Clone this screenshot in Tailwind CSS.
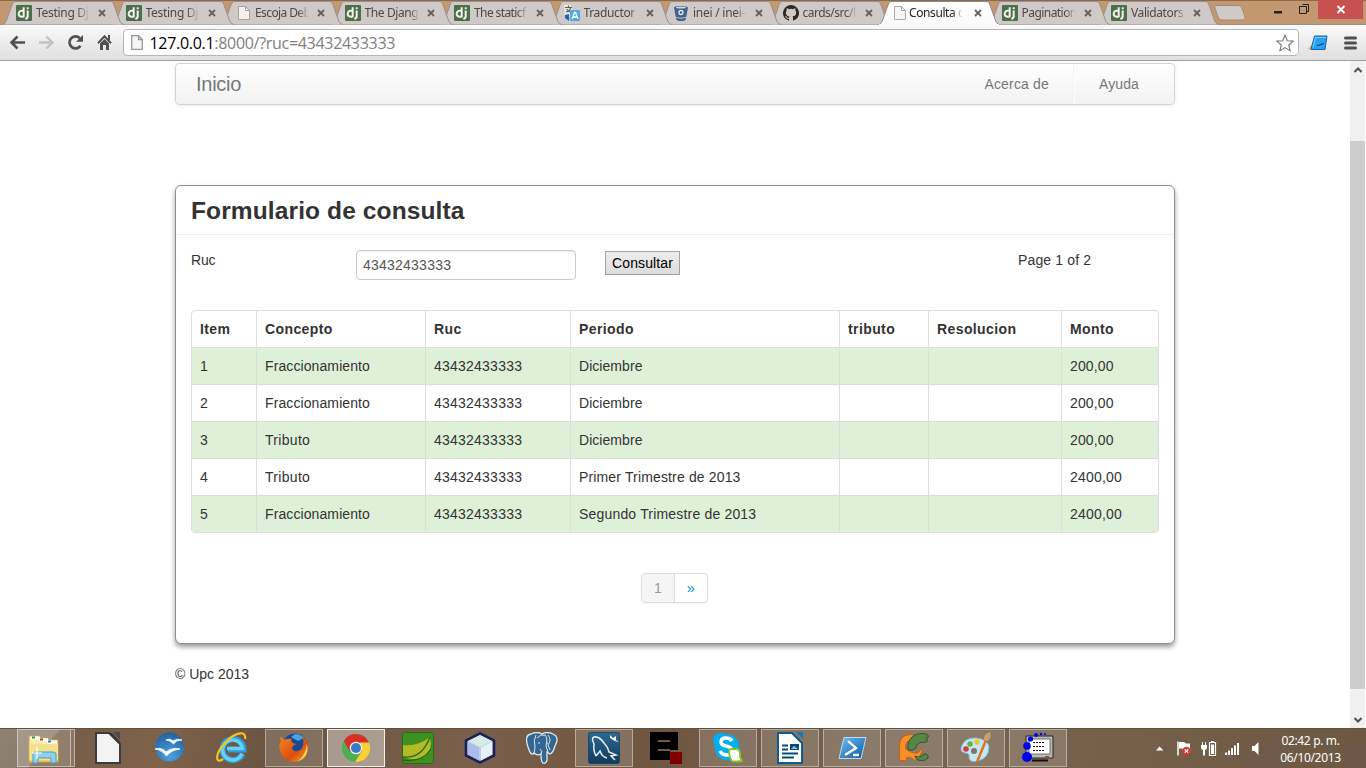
<!DOCTYPE html>
<html lang="es">
<head>
<meta charset="utf-8">
<title>Consulta de tributos</title>
<script src="https://cdn.jsdelivr.net/npm/@tailwindcss/browser@4"></script>
</head>
<body class="w-[1366px] h-[768px] overflow-hidden flex flex-col bg-white font-['Liberation_Sans',sans-serif] text-sm leading-5 text-[#333]">

<svg class="absolute size-0">
  <defs>
    <linearGradient id="gActive" x1="0" y1="0" x2="0" y2="1"><stop offset="0" stop-color="#fff"/><stop offset="1" stop-color="#fafafa"/></linearGradient>
    <linearGradient id="gBlue" x1="0" y1="0" x2="1" y2="1"><stop offset="0" stop-color="#6fc0ee"/><stop offset="1" stop-color="#0b57a4"/></linearGradient>
    <linearGradient id="gFolder" x1="0" y1="0" x2="0" y2="1"><stop offset="0" stop-color="#fdf6b8"/><stop offset="1" stop-color="#e9cf6c"/></linearGradient>
    <linearGradient id="gDark" x1="0" y1="0" x2="0" y2="1"><stop offset="0" stop-color="#2c6a94"/><stop offset="1" stop-color="#113a5c"/></linearGradient>
    <radialGradient id="gBird" cx=".5" cy=".8" r=".8"><stop offset="0" stop-color="#4aa3e0"/><stop offset="1" stop-color="#22619f"/></radialGradient>
    <linearGradient id="gFox" x1="0" y1="0" x2="1" y2="1"><stop offset="0" stop-color="#f08a1c"/><stop offset=".6" stop-color="#dd4c12"/><stop offset="1" stop-color="#f7b52a"/></linearGradient>
  </defs>
  <symbol id="tab" viewBox="0 0 122 25"><path d="M0 24.5C3 24 4 22 5 19L10 5C11 2 12 1.500 14 1.500H108C110 1.500 111 2 112 5L117 19C118 22 119 24 122 24.500" fill="#cfcac7" stroke="#96918e"/></symbol>
  <symbol id="tabActive" viewBox="0 0 122 25"><path d="M0 25C3 24 4 22 5 19L10 5C11 2 12 1.500 14 1.500H108C110 1.500 111 2 112 5L117 19C118 22 119 24 122 25" fill="url(#gActive)" stroke="#8d8986"/><path d="M1 24.500H121" stroke="#fafafa"/></symbol>
  <symbol id="dj" viewBox="0 0 16 16"><rect width="16" height="16" rx="1" fill="#4c6f4b"/><path d="M7.700 2.200V11.300C6.300 12 2.700 12.200 2.700 8.700C2.700 6 5 5.200 7 5.900M11.700 5.500V11C11.700 13 10.900 13.600 9.300 13.800" fill="none" stroke="#f4f1ea" stroke-width="2"/><path d="M10.700 2.300h2v1.900h-2z" fill="#f4f1ea"/></symbol>
  <symbol id="page" viewBox="0 0 12 14"><path d="M.5.5H7.500L11.500 4.500V13.500H.5Z" fill="#f4f0ec" stroke="#a8a29c"/><path d="M7.500.5V4.500H11.500" fill="none" stroke="#a8a29c"/></symbol>
  <symbol id="x" viewBox="0 0 8 8"><path d="M1 1L7 7M7 1L1 7" stroke="#66605c" stroke-width="1.800"/></symbol>
</svg>

<!-- Tab strip -->
<header class="h-[25px] shrink-0 relative bg-[#c39770] border-b border-[#96918e] shadow-[inset_0_1px_0_#8e6a4c] flex pl-0.5 z-10 text-[#4f4945] font-['Noto_Sans',sans-serif] text-[12px] leading-[16px]">
  <div class="flex h-[25px]" id="tabs">
    <div class="relative z-11 w-[109.5px] h-[25px] flex items-center pl-[14px]"><svg class="absolute left-0 top-0 w-[122px] h-[25px]"><use href="#tab"/></svg><svg class="relative size-4 shrink-0"><use href="#dj"/></svg><span class="relative ml-1 w-[54px] whitespace-nowrap tracking-[-0.3px] mask-r-from-75%">Testing Dj</span><svg class="relative ml-2 size-2 shrink-0"><use href="#x"/></svg></div>
    <div class="relative z-10 w-[109.5px] h-[25px] flex items-center pl-[14px]"><svg class="absolute left-0 top-0 w-[122px] h-[25px]"><use href="#tab"/></svg><svg class="relative size-4 shrink-0"><use href="#dj"/></svg><span class="relative ml-1 w-[54px] whitespace-nowrap tracking-[-0.3px] mask-r-from-75%">Testing Dj</span><svg class="relative ml-2 size-2 shrink-0"><use href="#x"/></svg></div>
    <div class="relative z-9 w-[109.5px] h-[25px] flex items-center pl-[14px]"><svg class="absolute left-0 top-0 w-[122px] h-[25px]"><use href="#tab"/></svg><svg class="relative ml-[3px] mr-px h-[14px] w-3 shrink-0"><use href="#page"/></svg><span class="relative ml-1 w-[54px] whitespace-nowrap tracking-[-0.6px] mask-r-from-80%">Escoja Deb</span><svg class="relative ml-2 size-2 shrink-0"><use href="#x"/></svg></div>
    <div class="relative z-8 w-[109.5px] h-[25px] flex items-center pl-[14px]"><svg class="absolute left-0 top-0 w-[122px] h-[25px]"><use href="#tab"/></svg><svg class="relative size-4 shrink-0"><use href="#dj"/></svg><span class="relative ml-1 w-[54px] whitespace-nowrap tracking-[-0.4px] mask-r-from-85%">The Djang</span><svg class="relative ml-2 size-2 shrink-0"><use href="#x"/></svg></div>
    <div class="relative z-7 w-[109.5px] h-[25px] flex items-center pl-[14px]"><svg class="absolute left-0 top-0 w-[122px] h-[25px]"><use href="#tab"/></svg><svg class="relative size-4 shrink-0"><use href="#dj"/></svg><span class="relative ml-1 w-[54px] whitespace-nowrap tracking-[-0.6px] mask-r-from-80%">The staticf</span><svg class="relative ml-2 size-2 shrink-0"><use href="#x"/></svg></div>
    <div class="relative z-6 w-[109.5px] h-[25px] flex items-center pl-[14px]"><svg class="absolute left-0 top-0 w-[122px] h-[25px]"><use href="#tab"/></svg><svg class="relative size-4 shrink-0" viewBox="0 0 16 16"><path d="M0 0h7l2 9-1 3H1z" fill="#eee9df"/><path d="M1 2.500H8M4.500 .5V3M2 7C5 6 6.500 4 6.500 2.500M2.500 4C4 6 6 7 8 7.500" stroke="#5c5c55" stroke-width="1.200" fill="none"/><path d="M1 10L5 9V16L1 13Z" fill="#1b62b5"/><rect x="6" y="5" width="10" height="11" rx="1.500" fill="#49a8e4"/><path d="M8 14L10.500 7.500H11.500L14 14M9 12H13" stroke="#fff" stroke-width="1.400" fill="none"/></svg><span class="relative ml-1 w-[54px] whitespace-nowrap tracking-[-0.35px] mask-r-from-85%">Traductor</span><svg class="relative ml-2 size-2 shrink-0"><use href="#x"/></svg></div>
    <div class="relative z-5 w-[109.5px] h-[25px] flex items-center pl-[14px]"><svg class="absolute left-0 top-0 w-[122px] h-[25px]"><use href="#tab"/></svg><svg class="relative size-4 shrink-0" viewBox="0 0 16 16"><path d="M1 2.500C1 .4 15 .4 15 2.500L13.300 11.500C13 13 3 13 2.700 11.500Z" fill="#3f628e"/><ellipse cx="8" cy="2.500" rx="5" ry="1" fill="#cdd5de"/><circle cx="8" cy="7.500" r="2" fill="none" stroke="#e6eaf0" stroke-width="1.300"/><path d="M3 12.500C5 14 11 14 13 12.500L12.500 15C11 16.300 5 16.300 3.500 15Z" fill="#3f628e"/></svg><span class="relative ml-1 w-[54px] whitespace-nowrap tracking-[-0.25px] mask-r-from-80%">inei / inei-</span><svg class="relative ml-2 size-2 shrink-0"><use href="#x"/></svg></div>
    <div class="relative z-4 w-[109.5px] h-[25px] flex items-center pl-[14px]"><svg class="absolute left-0 top-0 w-[122px] h-[25px]"><use href="#tab"/></svg><svg class="relative size-4 shrink-0" viewBox="0 0 16 16"><path d="M8 0a8 8 0 0 0-2.530 15.590c.4.070.550-.170.550-.380v-1.490c-2.010.37-2.530-.49-2.690-.94-.09-.23-.48-.94-.82-1.130-.28-.15-.68-.52-.01-.53.63-.01 1.080.58 1.230.82.72 1.210 1.870.87 2.330.66.070-.52.280-.87.510-1.070-1.780-.2-3.640-.89-3.640-3.950 0-.87.310-1.590.82-2.150-.08-.2-.36-1.020.08-2.120 0 0 .67-.21 2.200.82a7.600 7.600 0 0 1 4 0c1.530-1.040 2.200-.82 2.200-.82.440 1.100.160 1.920.080 2.120.510.560.820 1.270.820 2.150 0 3.070-1.870 3.750-3.650 3.950.290.250.540.730.540 1.480v2.200c0 .210.150.460.550.380A8 8 0 0 0 8 0z" fill="#302823"/></svg><span class="relative ml-1 w-[54px] whitespace-nowrap tracking-[-0.5px] mask-r-from-80%">cards/src/l</span><svg class="relative ml-2 size-2 shrink-0"><use href="#x"/></svg></div>
    <div class="relative z-20 w-[109.5px] h-[25px] flex items-center pl-[14px] text-[#222]"><svg class="absolute left-0 top-0 w-[122px] h-[25px]"><use href="#tabActive"/></svg><svg class="relative ml-[2px] mr-0.5 h-[14px] w-3 shrink-0" viewBox="0 0 12 14"><path d="M.5.5H7.500L11.500 4.500V13.500H.5Z" fill="#f6f6f6" stroke="#aaa"/><path d="M7.500.5V4.500H11.500" fill="none" stroke="#aaa"/></svg><span class="relative ml-px w-[54px] whitespace-nowrap tracking-[-0.4px] mask-r-from-80%">Consulta c</span><svg class="relative ml-[11px] size-2 shrink-0"><use href="#x"/></svg></div>
    <div class="relative z-2 w-[109.5px] h-[25px] flex items-center pl-[14px]"><svg class="absolute left-0 top-0 w-[122px] h-[25px]"><use href="#tab"/></svg><svg class="relative size-4 shrink-0"><use href="#dj"/></svg><span class="relative ml-1 w-[54px] whitespace-nowrap tracking-[-0.55px] mask-r-from-80%">Pagination</span><svg class="relative ml-2 size-2 shrink-0"><use href="#x"/></svg></div>
    <div class="relative z-1 w-[109.5px] h-[25px] flex items-center pl-[14px]"><svg class="absolute left-0 top-0 w-[122px] h-[25px]"><use href="#tab"/></svg><svg class="relative size-4 shrink-0"><use href="#dj"/></svg><span class="relative ml-1 w-[54px] whitespace-nowrap tracking-[-0.4px] mask-r-from-85%">Validators</span><svg class="relative ml-2 size-2 shrink-0"><use href="#x"/></svg></div>
  </div>
  <svg class="ml-[7px] mt-[5px] w-[33px] h-4 shrink-0" viewBox="0 0 33 16"><path d="M3 .5H24C26 .5 27 1.500 28 3.500L31 12C31.500 14 31 15 29 15H8C6 15 5 14 4 12L1 3C.5 1 1 .5 3 .5Z" fill="#cfcac7" stroke="#a78a72"/></svg>
  <svg class="ml-auto mr-[3px] w-[92px] h-5 shrink-0" viewBox="0 0 92 20"><path d="M3 11h8v2.500H3z" fill="#222"/><path d="M31.500 4.500H37.500V11.500H36" fill="none" stroke="#222"/><path d="M28.500 6.500H35.500V13.500H28.500Z" fill="none" stroke="#222"/><path d="M47 0H92V19H47Z" fill="#c75050"/><path d="M66.500 6L73.500 13M73.500 6L66.500 13" stroke="#fff" stroke-width="1.800"/></svg>
</header>

<!-- Toolbar -->
<div class="h-9 shrink-0 bg-linear-to-b from-[#fafafa] to-[#dfdfdf] border-b border-[#a0a0a0] flex items-center pl-[9px]">
  <svg class="w-[106px] h-9 shrink-0" viewBox="0 0 106 36"><path d="M16 17.500H3M8.500 11.500L2.500 17.500L8.500 23.500" fill="none" stroke="#505050" stroke-width="2.600"/><path d="M30 17.500H43M37.500 11.500L43.500 17.500L37.500 23.500" fill="none" stroke="#c2c2c2" stroke-width="2.400"/><path d="M71.500 20.800A6 6 0 1 1 70.800 13.200" fill="none" stroke="#505050" stroke-width="2.700"/><path d="M74 10V16.800H67Z" fill="#505050"/><path d="M89 18.200L95.500 11.300L102 18.200" fill="none" stroke="#505050" stroke-width="2"/><path d="M99 10h2v5h-2z" fill="#505050"/><path d="M91 18.500L95.500 14L100 18.500V25H97V20H94V25H91Z" fill="#505050"/></svg>
  <div class="ml-2 w-[1176px] h-[27px] shrink-0 bg-white border border-[#b5b5b5] rounded-sm flex items-center pl-[7px] pr-1 font-['Open_Sans',sans-serif] text-[16px] text-[#808080] whitespace-nowrap">
    <svg class="w-3 h-[15px] shrink-0" viewBox="0 0 12 15"><path d="M.7.7H7.500L11.300 4.500V14.300H.7Z" fill="#f6f6f6" stroke="#999" stroke-width="1.300"/><path d="M7.500.7V4.500H11.300" fill="none" stroke="#999" stroke-width="1.300"/></svg>
    <span class="ml-[6.5px] tracking-[-0.3px]"><span class="text-black">127.0.0.1</span>:8000/?ruc=43432433333</span>
    <svg class="ml-auto size-[18px]" viewBox="0 0 18 18"><path d="M9 1L11.300 6.700L17.300 7.100L12.700 11L14.200 16.900L9 13.600L3.800 16.900L5.300 11L.7 7.100L6.700 6.700Z" fill="#fff" stroke="#777" stroke-width="1.100" stroke-linejoin="round"/></svg>
  </div>
  <svg class="ml-2 w-[54px] h-6 shrink-0" viewBox="0 0 54 24"><path d="M1 18L6 12V19Z" fill="#f2a92e"/><path d="M7.500 5H20L18 18.500H4Z" fill="#2aa0ee" stroke="#1466b4"/><path d="M6 16.500L8.500 6.500H19" fill="none" stroke="#7fd0ff"/><path d="M10 14.500L12.500 14L17 12.500" stroke="#123e6b" fill="none" stroke-width="1.200"/><path d="M38.500 7H48.500M38.500 12H48.500M38.500 17H48.500" stroke="#505050" stroke-width="3" stroke-linecap="round"/></svg>
</div>

<!-- Viewport -->
<div class="h-[667px] shrink-0 flex">
  <main class="w-[1350px] pl-[175px] pt-0.5">
    <nav class="w-[1000px] h-[42px] flex items-center border border-[#d4d4d4] rounded bg-linear-to-b from-white to-[#f2f2f2] shadow-[0_1px_4px_rgba(0,0,0,0.065)] text-[#777]">
      <a class="pl-5 text-[20px] tracking-[-0.25px]">Inicio</a>
      <a class="ml-auto mr-6 tracking-[0.18px]">Acerca de</a>
      <span class="h-10 w-0.5 border-l border-[#f2f2f2] bg-white"></span>
      <a class="ml-6 mr-[35px] tracking-[0.1px]">Ayuda</a>
    </nav>

    <section class="mt-20 w-[1000px] h-[459px] border border-[#8f8f8f] rounded-md shadow-[0_3px_5px_rgba(0,0,0,0.4)] bg-white">
      <h3 class="h-[49px] px-[15px] border-b border-[#eee] text-[24.5px] leading-[49px] font-bold tracking-[0.12px]">Formulario de consulta</h3>
      <div class="flex items-start px-[15px] pt-[15px] h-[75px]">
        <label class="w-[165px] tracking-[-0.2px]">Ruc</label>
        <div class="w-[220px] h-[30px] border border-[#ccc] rounded shadow-[inset_0_1px_1px_rgba(0,0,0,0.075)] px-1.5 leading-[29px] text-[#555] tracking-[0.23px]">43432433333</div>
        <div class="ml-[29px] mt-px w-[75px] h-6 border border-[#a3a3a3] bg-linear-to-b from-[#ededed] to-[#dcdcdc] text-black text-center leading-[23px] tracking-[0.1px]">Consultar</div>
        <span class="ml-[338px] tracking-[0.15px]">Page 1 of 2</span>
      </div>
      <div class="ml-[15px] w-[968px] border border-[#ddd] rounded overflow-hidden">
        <table class="table-fixed w-[966px] border-separate border-spacing-0 text-left tracking-[0.15px] [&_th]:tracking-[0.4px] [&_th]:h-9 [&_td]:h-[37px] [&_td]:border-t [&_td]:border-[#ddd] [&_td]:px-2 [&_th]:px-2 [&_td+td]:border-l [&_th+th]:border-l [&_th+th]:border-[#ddd] [&_td]:pt-0 [&_td]:pb-px">
          <colgroup><col class="w-[64px]"><col class="w-[169px]"><col class="w-[145px]"><col class="w-[269px]"><col class="w-[89px]"><col class="w-[133px]"><col class="w-[97px]"></colgroup>
          <thead><tr><th>Item</th><th>Concepto</th><th>Ruc</th><th>Periodo</th><th>tributo</th><th>Resolucion</th><th>Monto</th></tr></thead>
          <tbody>
            <tr class="bg-[#dff0d8]"><td>1</td><td class="tracking-[0.1px]">Fraccionamiento</td><td class="tracking-[0.23px]">43432433333</td><td class="tracking-[0.05px]">Diciembre</td><td></td><td></td><td>200,00</td></tr>
            <tr><td>2</td><td class="tracking-[0.1px]">Fraccionamiento</td><td class="tracking-[0.23px]">43432433333</td><td class="tracking-[0.05px]">Diciembre</td><td></td><td></td><td>200,00</td></tr>
            <tr class="bg-[#dff0d8]"><td>3</td><td class="tracking-[0.3px]">Tributo</td><td class="tracking-[0.23px]">43432433333</td><td class="tracking-[0.05px]">Diciembre</td><td></td><td></td><td>200,00</td></tr>
            <tr><td>4</td><td class="tracking-[0.3px]">Tributo</td><td class="tracking-[0.23px]">43432433333</td><td>Primer Trimestre de 2013</td><td></td><td></td><td class="tracking-[0.2px]">2400,00</td></tr>
            <tr class="bg-[#dff0d8]"><td>5</td><td class="tracking-[0.1px]">Fraccionamiento</td><td class="tracking-[0.23px]">43432433333</td><td class="tracking-[0.18px]">Segundo Trimestre de 2013</td><td></td><td></td><td class="tracking-[0.2px]">2400,00</td></tr>
          </tbody>
        </table>
      </div>
      <div class="mt-10 ml-[465px] w-[67px] h-[30px] flex border border-[#ddd] rounded shadow-[0_1px_2px_rgba(0,0,0,0.05)] overflow-hidden text-center leading-7">
        <span class="w-[33px] bg-[#f5f5f5] border-r border-[#ddd] text-[#999]">1</span>
        <a class="flex-1 text-[#0088cc]">»</a>
      </div>
    </section>
    <footer class="mt-5">© Upc 2013</footer>
  </main>
  <aside class="w-4 bg-[#f0f0f0] border-r border-white flex flex-col items-center">
    <svg class="mt-[5px] mb-[67px] size-2" viewBox="0 0 8 8"><path d="M.5 6L4 2.500L7.500 6" fill="none" stroke="#505050" stroke-width="2"/></svg>
    <div class="w-[15px] h-[548px] bg-[#cdcdcd]"></div>
    <svg class="mt-[27px] size-2" viewBox="0 0 8 8"><path d="M.5 2L4 5.500L7.500 2" fill="none" stroke="#505050" stroke-width="2"/></svg>
  </aside>
</div>

<!-- Taskbar -->
<div class="h-10 shrink-0 flex items-center pl-[15px] bg-[#76604b] bg-[linear-gradient(130deg,#8f8271_0px,#897b69_46px,transparent_48px),linear-gradient(100deg,#6f5a48_0%,#7f6249_12%,#6a5442_20%,#7a5f49_34%,#6f5641_48%,#776450_65%,#756049_82%,#6c5843_100%)] shadow-[inset_0_1px_0_#62503f]">
  <div class="w-[62px] flex justify-start pl-0.5"><div class="w-[54px] h-[38px] border border-white/45 bg-white/20 flex justify-center items-center"><svg class="w-8 h-8" viewBox="0 0 32 32"><path d="M1 8V4h10l1 2h8l1 2h9v22H1z" fill="url(#gFolder)" stroke="#c9a94d"/><path d="M3 6h9M11 8h9M19 10h10" stroke="#fff" stroke-width="3"/><path d="M4 5.500h3" stroke="#1ba13b" stroke-width="2"/><path d="M12 7.500h3" stroke="#d02b22" stroke-width="2"/><path d="M20 9.500h3" stroke="#2a83d6" stroke-width="2"/><path d="M1.500 12H30V28H1.500Z" fill="#f3e18c"/><path d="M5 31V22Q5 20 8 20H25Q28 20 28 22V31H23V26H10V31Z" fill="#8fd0ec" stroke="#4a9cc4"/><path d="M9 15V27M4 21H14" stroke="#fff" stroke-width="1.200"/></svg></div><div class="w-1 h-[38px] border border-l-0 border-white/45 bg-white/15"></div></div>
  <div class="w-[62px] flex justify-center"><svg class="w-8 h-8" viewBox="0 0 32 32"><path d="M4 1H17L28 12V31H4Z" fill="#f3f3f3" stroke="#3c3c3c" stroke-width="2"/><path d="M21 0h7v8z" fill="#4b4b4b"/><path d="M17 1L28 12V10L20 1Z" fill="#333"/></svg></div>
  <div class="w-[62px] flex justify-center"><svg class="w-8 h-8" viewBox="0 0 32 32"><circle cx="15.500" cy="15" r="14.500" fill="url(#gBird)"/><path d="M12 8Q16 6 19 9Q23 6 28 8Q22 8 19.500 12Q16 8 12 8ZM1 17Q8 15 12 20Q18 15 26 17Q17 18 12.500 24Q8 18 1 17Z" fill="#fff" stroke="#fff" stroke-width=".8"/></svg></div>
  <div class="w-[62px] flex justify-center"><svg class="w-8 h-8" viewBox="0 0 32 32"><path d="M26.500 22A10.500 10.500 0 1 1 27.500 17.500H12" fill="none" stroke="#2b9fdb" stroke-width="6"/><path d="M26 21.500A10 10 0 1 1 26.500 16.500H11" fill="none" stroke="#67d0f7" stroke-width="3.500"/><path d="M7 27C-1 33 -1 22 8 12C17 1 31-3 29 7" fill="none" stroke="#f4c420" stroke-width="2.200"/></svg></div>
  <div class="w-[62px] flex justify-center"><div class="w-[58px] h-[38px] border border-white/40 bg-white/15 flex justify-center items-center"><svg class="w-8 h-8" viewBox="0 0 32 32"><circle cx="17" cy="14" r="12.500" fill="#174a94"/><path d="M17 2a12 12 0 0 1 9 4l-6 3-7-4z" fill="#4aa3dc"/><path d="M2 5Q5 6 6 8Q10 6 14 7Q12 9 15 11L18 12Q15 14 14 15Q14 20 20 19Q23 18 24 16Q27 10 24 4Q32 11 30 19Q27 30 16 30Q4 29 2 19Q0 13 3 10Z" fill="url(#gFox)"/><path d="M29 12Q31 25 20 29Q28 23 29 12Z" fill="#fcdc56"/></svg></div></div>
  <div class="w-[62px] flex justify-center"><div class="w-[58px] h-[38px] border border-white/85 bg-white/40 flex justify-center items-center"><svg class="w-8 h-8" viewBox="0 0 32 32"><circle cx="16" cy="16" r="14" fill="#4caf50"/><path d="M3.900 9A14 14 0 0 1 29 11H16L10 20Z" fill="#d93025"/><path d="M29 10.500A14 14 0 0 1 15 30L22 19L20 10.500Z" fill="#fbd037"/><circle cx="16" cy="16" r="6.300" fill="#eee"/><circle cx="16" cy="16" r="5" fill="#3a78c6"/></svg></div></div>
  <div class="w-[62px] flex justify-center"><svg class="w-8 h-8" viewBox="0 0 32 32"><rect x=".5" y=".5" width="31" height="31" rx="2" fill="#3e9020" stroke="#276d15"/><path d="M1 13Q15 15 28 5Q31 18 23 24Q15 30 1 25Z" fill="#b3ba25"/><path d="M1 25Q20 27 28 5M1 28Q20 31 29 17" stroke="#2a6417" fill="none" stroke-width="1.300"/></svg></div>
  <div class="w-[62px] flex justify-center"><svg class="w-8 h-8" viewBox="0 0 32 32"><path d="M16 1.500L30 8.500V23.500L16 30.500L2 23.500V8.500Z" fill="#bcd0ee" stroke="#1c2055" stroke-width="2.600"/><path d="M16 3L28 9L16 15L4 9Z" fill="#d6ebe4"/><path d="M4 10L15 15.500V28.500L4 22.500Z" fill="#a9bde9"/><path d="M17 15.500L28 10V22.500L17 28.500Z" fill="#e8f1f7"/></svg></div>
  <div class="w-[62px] flex justify-center"><svg class="w-8 h-8" viewBox="0 0 32 32"><path d="M16 2Q21-1 27 2Q34 5 29 14Q27 21 24 22L21 20V28Q20 32 17 31Q15 30 15 22Q11 24 8 21Q5 25 2 15Q-2 3 5 2Q11-1 16 2Z" fill="#336791" stroke="#dfe8ee" stroke-width="1.300"/><path d="M10 3Q7 9 9 14Q9 18 8 21M22 3Q26 8 22 13L24 18M11 6Q14 2 19 3Q22 6 20 14L22 20M15 22Q17 19 14 17" fill="none" stroke="#dfe8ee"/><path d="M12 11h2M20 11h2" stroke="#dfe8ee"/></svg></div>
  <div class="w-[62px] flex justify-center"><div class="w-[58px] h-[38px] border border-white/40 bg-white/15 flex justify-center items-center"><svg class="w-8 h-8" viewBox="0 0 32 32"><rect x=".5" y=".5" width="31" height="31" rx="2" fill="url(#gDark)" stroke="#174a6c"/><path d="M8 24Q5 18 6 12Q3 6 6 5Q11 4 16 11Q20 15 21 20L28 23L23 24L27 28M8 24L12 19Q14 25 19 26" fill="none" stroke="#e8eef2" stroke-width="1.500"/><path d="M22 3L25 6L28 4V8L31 10L27 9L22 6Z" fill="#fff"/></svg></div></div>
  <div class="w-[62px] flex justify-center"><svg class="w-8 h-8" viewBox="0 0 32 32"><path d="M0 0H28V18H20V28H0Z" fill="#000"/><path d="M8 8H20V10H8ZM8 17H20V19H8Z" fill="#6e5847"/><path d="M20 20H32V32H20Z" fill="#800000"/></svg></div>
  <div class="w-[62px] flex justify-center"><div class="w-[58px] h-[38px] border border-white/40 bg-white/15 flex justify-center items-center"><svg class="w-8 h-8" viewBox="0 0 32 32"><path d="M2 4Q7-1 13 2Q26 2 27 14Q31 23 26 28Q21 31 16 28Q3 28 3 15Q0 9 2 4Z" fill="#00aff0"/><path d="M20 9Q18 6 14 6Q9 6 9 10Q9 13 14 14Q20 15 20 19Q20 23 15 23Q10 23 8 19" fill="none" stroke="#fff" stroke-width="3.500"/><path d="M17 19Q17 17 20 17H25Q28 18 28 21V25L30 29Q24 30 20 29Q17 25 17 19Z" fill="#fff" stroke="#8cc220" stroke-width="1.800"/></svg></div></div>
  <div class="w-[62px] flex justify-center"><div class="w-[58px] h-[38px] border border-white/40 bg-white/15 flex justify-center items-center"><svg class="w-8 h-8" viewBox="0 0 32 32"><path d="M4 1H18L28 11V31H4Z" fill="#fff" stroke="#0d5c8f" stroke-width="2"/><path d="M22 0h7v7z" fill="#1678b8"/><path d="M8 13.500h6M8 17.500h6M8 21.500h16M8 25.500h12" stroke="#0b4a76" stroke-width="2"/><path d="M16 12h9v6h-9z" fill="#0b4a76"/><path d="M17 17l3-3 4 3z" fill="#83c5ec"/></svg></div></div>
  <div class="w-[62px] flex justify-center"><div class="w-[58px] h-[38px] border border-white/40 bg-white/15 flex justify-center items-center"><svg class="w-8 h-8" viewBox="0 0 32 32"><path d="M8 5.500H30L25 26.500H3Z" fill="url(#gBlue)" stroke="#b7dcf3"/><path d="M12 9L20 16L9 23M17 23H23" fill="none" stroke="#fff" stroke-width="2.300"/></svg></div></div>
  <div class="w-[62px] flex justify-center"><div class="w-[58px] h-[38px] border border-white/40 bg-white/15 flex justify-center items-center"><svg class="w-8 h-8" viewBox="0 0 32 32"><path d="M1.500 28.500V13Q2 2.500 13 2.500H16L12 8.500Q7.500 9 7.500 15V17L15 21H20L24 15.500Q25 20 21 25.500L17 28.500Q14 25 9 25L8 28.500Z" fill="#f98e2b" stroke="#c9600f"/><path d="M10 18Q9 8 16 3.500Q20 1 27 1.500Q31 2.500 30.500 5L28 6Q31 8 28.500 10L22 10.500Q18 12 18 16Q15 19 10 18Z" fill="#568748" stroke="#31572a"/><path d="M17 24Q20 26 24 24Q25 21 28 22Q31 23 30 26Q28 29 23 28.500Q18 28.500 17 24Z" fill="#568748" stroke="#31572a"/></svg></div></div>
  <div class="w-[62px] flex justify-center"><div class="w-[58px] h-[38px] border border-white/40 bg-white/15 flex justify-center items-center"><svg class="w-8 h-8" viewBox="0 0 32 32"><path d="M17 6Q6 5 2 13Q-1 20 5 21Q10 21 9 26Q10 31 18 29Q29 26 29 15Q28 8 17 6Z" fill="#c7e5f4" stroke="#85b8d4"/><circle cx="6" cy="17" r="2.800" fill="#d83a37"/><circle cx="10" cy="12" r="2.700" fill="#55b44b"/><circle cx="17" cy="10" r="2.700" fill="#edc62b"/><circle cx="14" cy="19" r="3" fill="#7e7469"/><path d="M17 30L26 8" stroke="#d97727" stroke-width="2.500"/><path d="M24 8Q23 2 30 0Q32 5 28 9Z" fill="#c3a272"/></svg></div></div>
  <div class="w-[62px] flex justify-center"><div class="w-[58px] h-[38px] border border-white/40 bg-white/15 flex justify-center items-center"><svg class="w-8 h-8" viewBox="0 0 32 32"><path d="M4 4H31V26H4Z" fill="#b9b9b9" stroke="#222"/><path d="M7 7H28V22H7Z" fill="#fff" stroke="#555" stroke-width=".8"/><path d="M11 10.500H23M11 14.500H23M11 18.500H23" stroke="#111" stroke-dasharray="2 1"/><path d="M10 28.500H26" stroke="#111" stroke-width="2"/><path d="M23 24.500H27" stroke="#d22"/><g fill="#00e"><circle cx="5" cy="25" r="5"/><circle cx="5" cy="14" r="3.800"/><circle cx="8.500" cy="7" r="2.600"/><circle cx="14" cy="3" r="1.900"/><circle cx="19" cy="2" r="1.300"/><circle cx="23" cy="2" r="1"/></g></svg></div></div>
  <svg class="ml-[87px] w-[104px] h-5 shrink-0" viewBox="0 0 104 20"><path d="M0 12.500L3.500 8.500L7.500 12.500Z" fill="#fff"/><path d="M22 3.500V17.500" stroke="#fff" stroke-width="1.500"/><path d="M23 4H28L30 5.500H34V12H28L26 10.500H23Z" fill="#fff"/><circle cx="30.500" cy="13" r="4.300" fill="#d83a35"/><path d="M28.800 11.300L32.200 14.700M32.200 11.300L28.800 14.700" stroke="#fff" stroke-width="1.200"/><path d="M53.500 4.500H59.500V17.500H53.500ZM55 3.500H58" fill="none" stroke="#fff" stroke-width="1.200"/><path d="M55 6.500h3v9.500h-3z" fill="#fff"/><path d="M45 7H51V10Q51 11.500 49 12V17.500H47V12Q45 11.500 45 10ZM46 4h1v3h-1zM49 4h1v3h-1z" fill="#fff"/><path d="M69 14.500h2v2.500h-2zM72 12.500h2v4.500h-2zM75 10h2v7h-2zM78 7.500h2v9.500h-2zM81 5h2v12h-2z" fill="#fff"/><path d="M96 8H98.500L102.500 4V17L98.500 13H96Z" fill="#fff"/></svg>
  <div class="ml-[17px] w-[67px] text-white font-['Noto_Sans',sans-serif] text-[12px] leading-[17px] text-center whitespace-nowrap tracking-[-0.35px] pt-0.5">02:42 p. m.<br>06/10/2013</div>
</div>
</body>
</html>
